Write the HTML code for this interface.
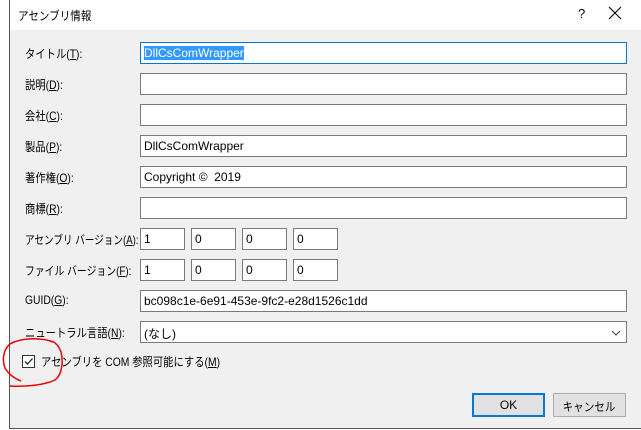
<!DOCTYPE html>
<html><head><meta charset="utf-8"><style>
*{box-sizing:border-box;margin:0;padding:0}
body{width:641px;height:430px;background:#fff;font-family:"Liberation Sans","Noto Sans CJK JP",sans-serif;font-size:12px;color:#000;position:relative;overflow:hidden}
.win{position:absolute;left:9px;top:0;width:632px;height:429px;border-left:1px solid #555;border-bottom:1px solid #555;background:#f0f0f0}
.title{position:absolute;left:0;top:0;width:100%;height:30px;background:#fff}
.title span{position:absolute;left:8px;top:7px;font-size:12px;transform:scaleX(0.88);transform-origin:left;display:inline-block}
.q{position:absolute;left:568px;top:6px;font-size:13px}
.x{position:absolute;left:598px;top:6px}
.lbl{position:absolute;left:16px;font-size:12px;white-space:nowrap;transform:scaleX(0.86);transform-origin:left}
.in{position:absolute;background:#fff;border:1px solid #7a7a7a;height:22px;font-size:12px;padding:3px 0 0 3px;white-space:nowrap}
.btn{position:absolute;top:393px;height:24px;background:#e1e1e1;border:1px solid #adadad;text-align:center;padding-top:4px}
u{text-decoration:underline}
</style></head><body>
<div class="win">
<div class="title"><span>アセンブリ情報</span><div class="q">?</div>
<svg class="x" width="14" height="14" viewBox="0 0 14 14"><path d="M1 1L13 13M13 1L1 13" stroke="#000" stroke-width="1.1"/></svg></div>
</div>
<div class="lbl" style="left:25px;top:45px">タイトル(<u>T</u>):</div>
<div class="in" style="left:140px;top:42px;width:487px;border:1px solid #0078d7"><span style="background:#3399ff;color:#fff">DllCsComWrapper</span></div>
<div class="lbl" style="left:25px;top:76px">説明(<u>D</u>):</div>
<div class="in" style="left:140px;top:73px;width:487px"></div>
<div class="lbl" style="left:25px;top:107px">会社(<u>C</u>):</div>
<div class="in" style="left:140px;top:104px;width:487px"></div>
<div class="lbl" style="left:25px;top:138px">製品(<u>P</u>):</div>
<div class="in" style="left:140px;top:135px;width:487px">DllCsComWrapper</div>
<div class="lbl" style="left:25px;top:169px">著作権(<u>O</u>):</div>
<div class="in" style="left:140px;top:166px;width:487px">Copyright ©&nbsp; 2019</div>
<div class="lbl" style="left:25px;top:200px">商標(<u>R</u>):</div>
<div class="in" style="left:140px;top:197px;width:487px"></div>
<div class="lbl" style="left:25px;top:231px;transform:scaleX(0.8)">アセンブリ バージョン(<u>A</u>):</div>
<div class="in" style="left:140px;top:228px;width:45px">1</div>
<div class="in" style="left:191px;top:228px;width:45px">0</div>
<div class="in" style="left:242px;top:228px;width:45px">0</div>
<div class="in" style="left:293px;top:228px;width:45px">0</div>
<div class="lbl" style="left:25px;top:262px;transform:scaleX(0.82)">ファイル バージョン(<u>F</u>):</div>
<div class="in" style="left:140px;top:259px;width:45px">1</div>
<div class="in" style="left:191px;top:259px;width:45px">0</div>
<div class="in" style="left:242px;top:259px;width:45px">0</div>
<div class="in" style="left:293px;top:259px;width:45px">0</div>
<div class="lbl" style="left:25px;top:293px">GUID(<u>G</u>):</div>
<div class="in" style="left:140px;top:290px;width:487px">bc098c1e-6e91-453e-9fc2-e28d1526c1dd</div>
<div class="lbl" style="left:25px;top:324px">ニュートラル言語(<u>N</u>):</div>
<div class="in" style="left:140px;top:321px;width:487px">(なし)
<svg style="position:absolute;right:5px;top:8px" width="10" height="6" viewBox="0 0 10 6"><path d="M1 1L5 5L9 1" fill="none" stroke="#444"/></svg></div>
<div style="position:absolute;left:22px;top:355px;width:13px;height:13px;border:1px solid #333;background:#fff">
<svg width="11" height="11" viewBox="0 0 11 11" style="position:absolute;left:0;top:0"><path d="M2 5.5L4.5 8L9.5 2.5" fill="none" stroke="#222" stroke-width="1.3"/></svg></div>
<div class="lbl" style="left:41px;top:353px;transform:scaleX(0.86)">アセンブリを COM 参照可能にする(<u>M</u>)</div>
<svg style="position:absolute;left:0;top:0" width="641" height="430"><path d="M53 342C40 337 20 338 10 344C3 350 2 360 5 368C9 375 16 379 21 381M10 386C25 387 45 385 55 380C63 374 63 360 61 352C59 346 56 343 52 341" fill="none" stroke="#e00" stroke-width="1.5"/></svg>
<div class="btn" style="left:472px;width:73px;border:2px solid #0078d7;padding-top:3px">OK</div>
<div class="btn" style="left:553px;width:73px"><span style="display:inline-block;transform:scaleX(0.88)">キャンセル</span></div>
</body></html>
